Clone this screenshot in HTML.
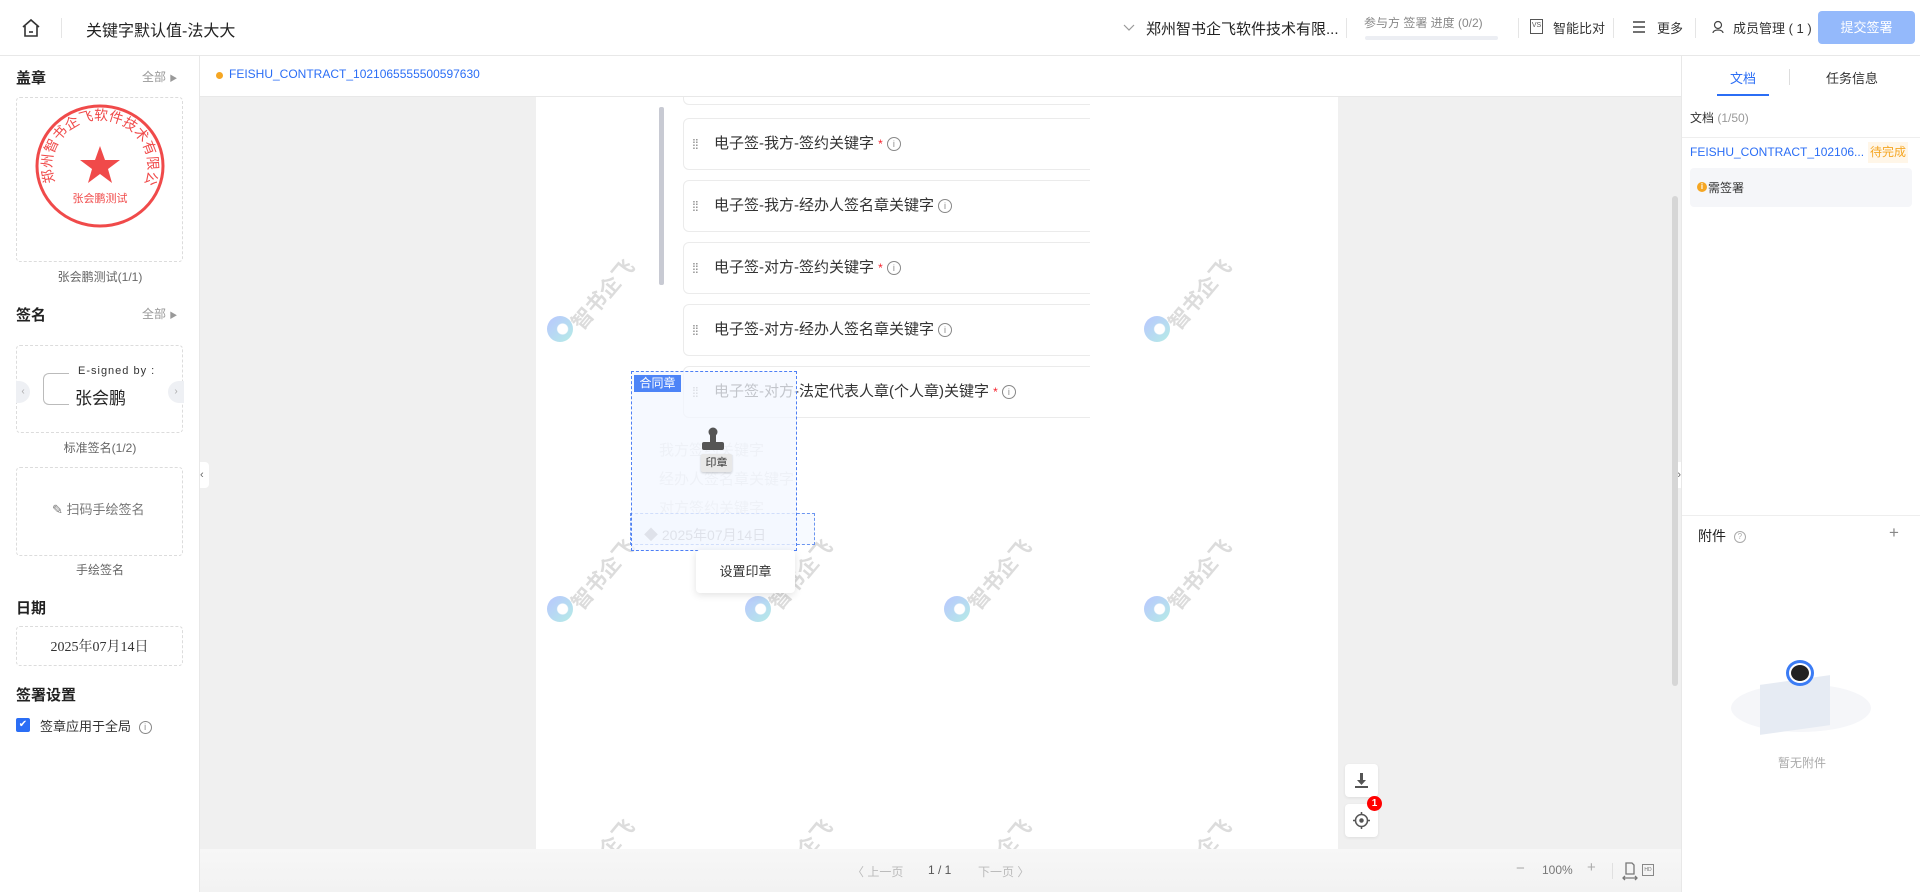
<!DOCTYPE html>
<html><head><meta charset="utf-8">
<style>
*{box-sizing:border-box;margin:0;padding:0}
body{width:1920px;height:892px;overflow:hidden;background:#fff;font-family:"Liberation Sans","Noto Sans CJK SC",sans-serif;color:#333;position:relative}
.a{position:absolute}
.hdr{left:0;top:0;width:1920px;height:56px;border-bottom:1px solid #e8e8e8}
.t{white-space:nowrap}
.g{color:#999}
.box{border:1px dashed #dcdcdc;border-radius:4px}
.card{left:683px;width:420px;height:52px;border:1px solid #ebebeb;border-radius:6px;background:#fff;font-size:15px;color:#333;padding:0 0 0 30px;line-height:50px;white-space:nowrap}
.card .d{position:absolute;left:8px;top:0;color:#888;font-size:14px;letter-spacing:-1px}
.card .s{color:#f5222d;font-size:12px}
.info{display:inline-block;width:14px;height:14px;border:1.3px solid #888;border-radius:50%;font-size:9px;line-height:12px;text-align:center;color:#888;vertical-align:middle;margin-left:4px}
.wm{color:#dcdcdc;font-weight:bold;font-size:21px;transform:rotate(-50deg);transform-origin:left bottom;white-space:nowrap}
.logo{width:26px;height:26px;border-radius:50%;background:radial-gradient(circle at 60% 50%,#fff 0 5px,transparent 6px),linear-gradient(135deg,#b9c6ff,#b5ece6)}
</style></head><body>
<div class="a hdr"></div>
<svg class="a" style="left:20px;top:17px" width="22" height="22" viewBox="0 0 22 22" fill="none" stroke="#333" stroke-width="1.6"><path d="M3 10 L11 3 L19 10 M5 9 V19 H17 V9"/><path d="M9 15 H13"/></svg>
<div class="a" style="left:61px;top:18px;width:1px;height:20px;background:#e5e5e5"></div>
<div class="a t" style="left:86px;top:17px;font-size:16px;color:#222">关键字默认值-法大大</div>
<svg class="a" style="left:1122px;top:21px" width="14" height="14" viewBox="0 0 14 14" fill="none" stroke="#999" stroke-width="1.2"><path d="M2 4 L7 9 L12 4"/></svg>
<div class="a t" style="left:1146px;top:18px;font-size:15px;color:#222">郑州智书企飞软件技术有限...</div>
<div class="a" style="left:1346px;top:18px;width:1px;height:20px;background:#e5e5e5"></div>
<div class="a t" style="left:1364px;top:14px;font-size:12px;color:#888">参与方 签署 进度 (0/2)</div>
<div class="a" style="left:1365px;top:36px;width:133px;height:4px;border-radius:2px;background:#eceef3"></div>
<div class="a" style="left:1518px;top:18px;width:1px;height:20px;background:#e5e5e5"></div>
<div class="a" style="left:1530px;top:19px;width:13px;height:15px;border:1.5px solid #555;font-size:7px;line-height:11px;text-align:center;color:#555">VS</div>
<div class="a t" style="left:1553px;top:18px;font-size:13px;color:#333">智能比对</div>
<div class="a" style="left:1613px;top:18px;width:1px;height:20px;background:#e5e5e5"></div>
<svg class="a" style="left:1632px;top:20px" width="14" height="14" viewBox="0 0 14 14" stroke="#444" stroke-width="1.4"><path d="M1 2H13M1 7H13M1 12H13"/></svg>
<div class="a t" style="left:1657px;top:18px;font-size:13px;color:#333">更多</div>
<div class="a" style="left:1695px;top:18px;width:1px;height:20px;background:#e5e5e5"></div>
<svg class="a" style="left:1712px;top:20px" width="14" height="14" viewBox="0 0 14 14" fill="none" stroke="#444" stroke-width="1.2"><circle cx="6" cy="5" r="3.5"/><path d="M1 13 C1 9 11 9 11 13"/></svg>
<div class="a t" style="left:1733px;top:18px;font-size:13px;color:#333">成员管理 ( 1 )</div>
<div class="a" style="left:1818px;top:11px;width:97px;height:33px;border-radius:4px;background:#94b9fb;color:#fff;font-size:13px;line-height:33px;text-align:center">提交签署</div>

<div class="a" style="left:199px;top:56px;width:1px;height:836px;background:#e8e8e8"></div>
<div class="a t" style="left:16px;top:67px;font-size:15px;font-weight:bold;color:#222">盖章</div>
<div class="a t g" style="left:142px;top:68px;font-size:12px">全部 <span style="font-size:8px">▶</span></div>
<div class="a box" style="left:16px;top:97px;width:167px;height:165px"></div>
<svg class="a" style="left:33px;top:102px" width="134" height="128" viewBox="0 0 134 128">
<ellipse cx="67" cy="64" rx="63" ry="60" fill="none" stroke="#f04a4a" stroke-width="3"/>
<path id="arc" d="M22 80 A48 46 0 1 1 112 80" fill="none"/>
<text font-size="14" fill="#f04a4a" font-family="Noto Sans CJK SC"><textPath href="#arc">郑州智书企飞软件技术有限公司</textPath></text>
<polygon points="67,44 72,58 87,58 75,67 79,81 67,72 55,81 59,67 47,58 62,58" fill="#f04a4a"/>
<text x="67" y="100" font-size="11" fill="#f04a4a" text-anchor="middle" font-family="Noto Sans CJK SC">张会鹏测试</text>
</svg>
<div class="a t" style="left:0;width:200px;text-align:center;top:268px;font-size:12px;color:#666">张会鹏测试(1/1)</div>
<div class="a t" style="left:16px;top:304px;font-size:15px;font-weight:bold;color:#222">签名</div>
<div class="a t g" style="left:142px;top:305px;font-size:12px">全部 <span style="font-size:8px">▶</span></div>
<div class="a box" style="left:16px;top:345px;width:167px;height:88px"></div>
<div class="a" style="left:16px;top:381px;width:14px;height:22px;border-radius:0 11px 11px 0;background:#eef0f4;color:#aaa;font-size:10px;line-height:22px;text-align:center">‹</div>
<div class="a" style="left:168px;top:381px;width:16px;height:22px;border-radius:11px 0 0 11px;background:#eef0f4;color:#aaa;font-size:10px;line-height:22px;text-align:center">›</div>
<div class="a" style="left:43px;top:373px;width:26px;height:32px;border:1px solid #bbb;border-right:none;border-radius:6px 0 0 6px"></div>
<div class="a t" style="left:78px;top:365px;font-size:11px;color:#333;letter-spacing:1px">E-signed by :</div>
<div class="a t" style="left:75px;top:384px;font-size:17px;color:#222">张会鹏</div>
<div class="a t" style="left:0;width:200px;text-align:center;top:439px;font-size:12px;color:#666">标准签名(1/2)</div>
<div class="a box" style="left:16px;top:467px;width:167px;height:89px"></div>
<div class="a t" style="left:52px;top:499px;font-size:13px;color:#777">✎ 扫码手绘签名</div>
<div class="a t" style="left:0;width:200px;text-align:center;top:561px;font-size:12px;color:#666">手绘签名</div>
<div class="a t" style="left:16px;top:597px;font-size:15px;font-weight:bold;color:#222">日期</div>
<div class="a box" style="left:16px;top:626px;width:167px;height:40px"></div>
<div class="a t" style="left:16px;width:167px;text-align:center;top:636px;font-size:14px;color:#333;font-family:'Liberation Serif','Noto Serif CJK SC',serif">2025年07月14日</div>
<div class="a t" style="left:16px;top:684px;font-size:15px;font-weight:bold;color:#222">签署设置</div>
<div class="a" style="left:16px;top:718px;width:14px;height:14px;border-radius:2px;background:#2b6ef5;color:#fff;font-size:10px;line-height:14px;text-align:center">✔</div>
<div class="a t" style="left:40px;top:716px;font-size:13px;color:#333">签章应用于全局 <span class="info" style="width:13px;height:13px;line-height:11px">i</span></div>

<div class="a" style="left:200px;top:96px;width:1481px;height:1px;background:#e8e8e8"></div>
<div class="a" style="left:216px;top:72px;width:7px;height:7px;border-radius:50%;background:#f5a623"></div>
<div class="a t" style="left:229px;top:67px;font-size:12px;color:#2b6ef5">FEISHU_CONTRACT_1021065555500597630</div>

<div class="a" style="left:200px;top:97px;width:1481px;height:752px;background:#f0f0f0"></div>
<div class="a" style="left:536px;top:97px;width:802px;height:752px;background:#fff;overflow:hidden">
  <div class="a" style="left:123px;top:10px;width:5px;height:178px;background:#c8cad3;border-radius:2px"></div>
  <div class="a card" style="left:147px;top:-20px;width:440px;height:28px"></div>
  <div class="a card" style="left:147px;top:21px;width:440px"><span class="d">⁞⁞</span>电子签-我方-签约关键字 <span class="s">*</span><span class="info">i</span></div>
  <div class="a card" style="left:147px;top:83px;width:440px"><span class="d">⁞⁞</span>电子签-我方-经办人签名章关键字<span class="info">i</span></div>
  <div class="a card" style="left:147px;top:145px;width:440px"><span class="d">⁞⁞</span>电子签-对方-签约关键字 <span class="s">*</span><span class="info">i</span></div>
  <div class="a card" style="left:147px;top:207px;width:440px"><span class="d">⁞⁞</span>电子签-对方-经办人签名章关键字<span class="info">i</span></div>
  <div class="a card" style="left:147px;top:269px;width:440px"><span class="d">⁞⁞</span>电子签-对方-法定代表人章(个人章)关键字 <span class="s">*</span><span class="info">i</span></div>
  <div class="a" style="left:554px;top:0;width:248px;height:752px;background:#fff"></div>
  <div class="a t" style="left:123px;top:342px;font-size:15px;color:#ddd">我方签约关键字</div>
  <div class="a t" style="left:123px;top:371px;font-size:15px;color:#ddd">经办人签名章关键字</div>
  <div class="a t" style="left:123px;top:400px;font-size:15px;color:#ddd">对方签约关键字</div>
  <div class="a t" style="left:108px;top:428px;font-size:14px;color:#555">◆ 2025年07月14日</div>
</div>
<div class="a logo" style="left:547px;top:316px"></div><div class="a wm" style="left:587px;top:306px">智书企飞</div>
<div class="a logo" style="left:1144px;top:316px"></div><div class="a wm" style="left:1184px;top:306px">智书企飞</div>
<div class="a logo" style="left:547px;top:596px"></div><div class="a wm" style="left:587px;top:586px">智书企飞</div>
<div class="a logo" style="left:745px;top:596px"></div><div class="a wm" style="left:785px;top:586px">智书企飞</div>
<div class="a logo" style="left:944px;top:596px"></div><div class="a wm" style="left:984px;top:586px">智书企飞</div>
<div class="a logo" style="left:1144px;top:596px"></div><div class="a wm" style="left:1184px;top:586px">智书企飞</div>
<div class="a wm" style="left:587px;top:866px">智书企飞</div>
<div class="a wm" style="left:785px;top:866px">智书企飞</div>
<div class="a wm" style="left:984px;top:866px">智书企飞</div>
<div class="a wm" style="left:1184px;top:866px">智书企飞</div>

<div class="a" style="left:630px;top:513px;width:185px;height:32px;border:1px dashed #6b95f0;background:rgba(240,245,255,.5)"></div>
<div class="a" style="left:631px;top:371px;width:166px;height:180px;border:1px dashed #4d7ff5;background:rgba(243,247,255,.75)"></div>
<div class="a t" style="left:634px;top:375px;width:47px;height:17px;background:#4d84f7;color:#fff;font-size:12px;line-height:17px;text-align:center">合同章</div>
<svg class="a" style="left:700px;top:427px" width="26" height="28" viewBox="0 0 26 28" fill="#555"><circle cx="13" cy="5" r="4.5"/><rect x="10" y="8" width="6" height="8"/><rect x="2" y="15" width="22" height="8" rx="2"/></svg>
<div class="a t" style="left:701px;top:454px;width:31px;height:18px;background:#e8e8e8;border-radius:2px;font-size:11px;line-height:18px;text-align:center;color:#333;box-shadow:0 1px 2px rgba(0,0,0,.2)">印章</div>
<div class="a t" style="left:696px;top:550px;width:99px;height:43px;background:#fff;border-radius:4px;box-shadow:0 2px 8px rgba(0,0,0,.12);font-size:13px;line-height:43px;text-align:center;color:#333">设置印章</div>

<div class="a" style="left:200px;top:462px;width:9px;height:26px;background:#fff;border-radius:0 4px 4px 0;color:#666;font-size:11px;line-height:26px">‹</div>
<div class="a" style="left:1672px;top:462px;width:9px;height:26px;background:#fff;border-radius:4px 0 0 4px;color:#666;font-size:11px;line-height:26px;text-align:right">›</div>
<div class="a" style="left:1672px;top:196px;width:6px;height:490px;background:#d6d6d6;border-radius:3px"></div>

<div class="a" style="left:1345px;top:764px;width:33px;height:33px;background:#fff;border-radius:4px;box-shadow:0 1px 3px rgba(0,0,0,.08)"></div>
<svg class="a" style="left:1352px;top:771px" width="19" height="19" viewBox="0 0 19 19" fill="#555"><path d="M8 2H11V9H14L9.5 14L5 9H8Z"/><rect x="3" y="15" width="13" height="2"/></svg>
<div class="a" style="left:1345px;top:804px;width:33px;height:33px;background:#fff;border-radius:4px;box-shadow:0 1px 3px rgba(0,0,0,.08)"></div>
<svg class="a" style="left:1352px;top:811px" width="19" height="19" viewBox="0 0 19 19" fill="none" stroke="#555" stroke-width="1.5"><circle cx="9.5" cy="9.5" r="6"/><circle cx="9.5" cy="9.5" r="1.5" fill="#555"/><path d="M9.5 1V4M9.5 15V18M1 9.5H4M15 9.5H18"/></svg>
<div class="a" style="left:1367px;top:796px;width:15px;height:15px;border-radius:50%;background:#f00;color:#fff;font-size:10px;font-weight:bold;line-height:15px;text-align:center">1</div>

<div class="a" style="left:200px;top:849px;width:1481px;height:43px;background:linear-gradient(#f7f7f7,#f2f2f2)"></div>
<div class="a t" style="left:852px;top:863px;font-size:12px;color:#bbb">〈 上一页</div>
<div class="a t" style="left:928px;top:863px;font-size:12px;color:#555">1 / 1</div>
<div class="a t" style="left:978px;top:863px;font-size:12px;color:#bbb">下一页 〉</div>
<div class="a t" style="left:1516px;top:860px;font-size:15px;color:#aaa">−</div>
<div class="a t" style="left:1542px;top:863px;font-size:12px;color:#777">100%</div>
<div class="a t" style="left:1587px;top:859px;font-size:15px;color:#aaa">+</div>
<div class="a" style="left:1612px;top:863px;width:1px;height:16px;background:#e0e0e0"></div>
<svg class="a" style="left:1621px;top:861px" width="18" height="20" viewBox="0 0 18 20" fill="none" stroke="#777" stroke-width="1.3"><path d="M5 2H11L13 4V13H5Z"/><path d="M2 17H16M4 15L2 17L4 19M14 15L16 17L14 19"/></svg>
<div class="a" style="left:1642px;top:864px;width:12px;height:12px;border:1.2px solid #888;font-size:5px;line-height:10px;text-align:center;color:#777">HD</div>

<div class="a" style="left:1681px;top:56px;width:1px;height:836px;background:#e8e8e8"></div>
<div class="a t" style="left:1720px;top:68px;width:46px;text-align:center;font-size:13px;color:#2b6ef5">文档</div>
<div class="a" style="left:1717px;top:94px;width:52px;height:2px;background:#2b6ef5"></div>
<div class="a" style="left:1789px;top:69px;width:1px;height:16px;background:#ddd"></div>
<div class="a t" style="left:1826px;top:68px;font-size:13px;color:#333">任务信息</div>
<div class="a t" style="left:1690px;top:109px;font-size:12px;color:#333">文档 <span class="g">(1/50)</span></div>
<div class="a" style="left:1682px;top:137px;width:238px;height:1px;background:#eee"></div>
<div class="a t" style="left:1690px;top:145px;font-size:12px;color:#2b6ef5">FEISHU_CONTRACT_102106...</div>
<div class="a t" style="left:1868px;top:142px;width:40px;height:21px;background:#fff6e8;color:#f5a623;font-size:12px;line-height:21px;text-align:center">待完成</div>
<div class="a" style="left:1690px;top:168px;width:222px;height:39px;background:#f5f6f9;border-radius:4px"></div>
<div class="a" style="left:1697px;top:182px;width:10px;height:10px;border-radius:50%;background:#f5a623;color:#fff;font-size:8px;line-height:10px;text-align:center;font-weight:bold">i</div>
<div class="a t" style="left:1708px;top:179px;font-size:12px;color:#333">需签署</div>
<div class="a" style="left:1682px;top:515px;width:238px;height:1px;background:#eee"></div>
<div class="a t" style="left:1698px;top:526px;font-size:14px;color:#222">附件 <span class="info" style="width:12px;height:12px;line-height:10px;font-size:8px;color:#aaa;border-color:#aaa">?</span></div>
<div class="a t" style="left:1889px;top:523px;font-size:17px;color:#888">+</div>
<div class="a" style="left:1731px;top:684px;width:140px;height:48px;border-radius:50%;background:#f5f6f9"></div>
<div class="a" style="left:1760px;top:680px;width:70px;height:50px;background:#e6ebf3;transform:skewY(-8deg)"></div>
<div class="a" style="left:1786px;top:660px;width:28px;height:26px;border-radius:50%;background:#fff;border:3px solid #3b7cf5"></div>
<div class="a" style="left:1791px;top:665px;width:18px;height:16px;border-radius:50%;background:#222"></div>
<div class="a t" style="left:1778px;top:754px;font-size:12px;color:#aaa">暂无附件</div>
</body></html>
